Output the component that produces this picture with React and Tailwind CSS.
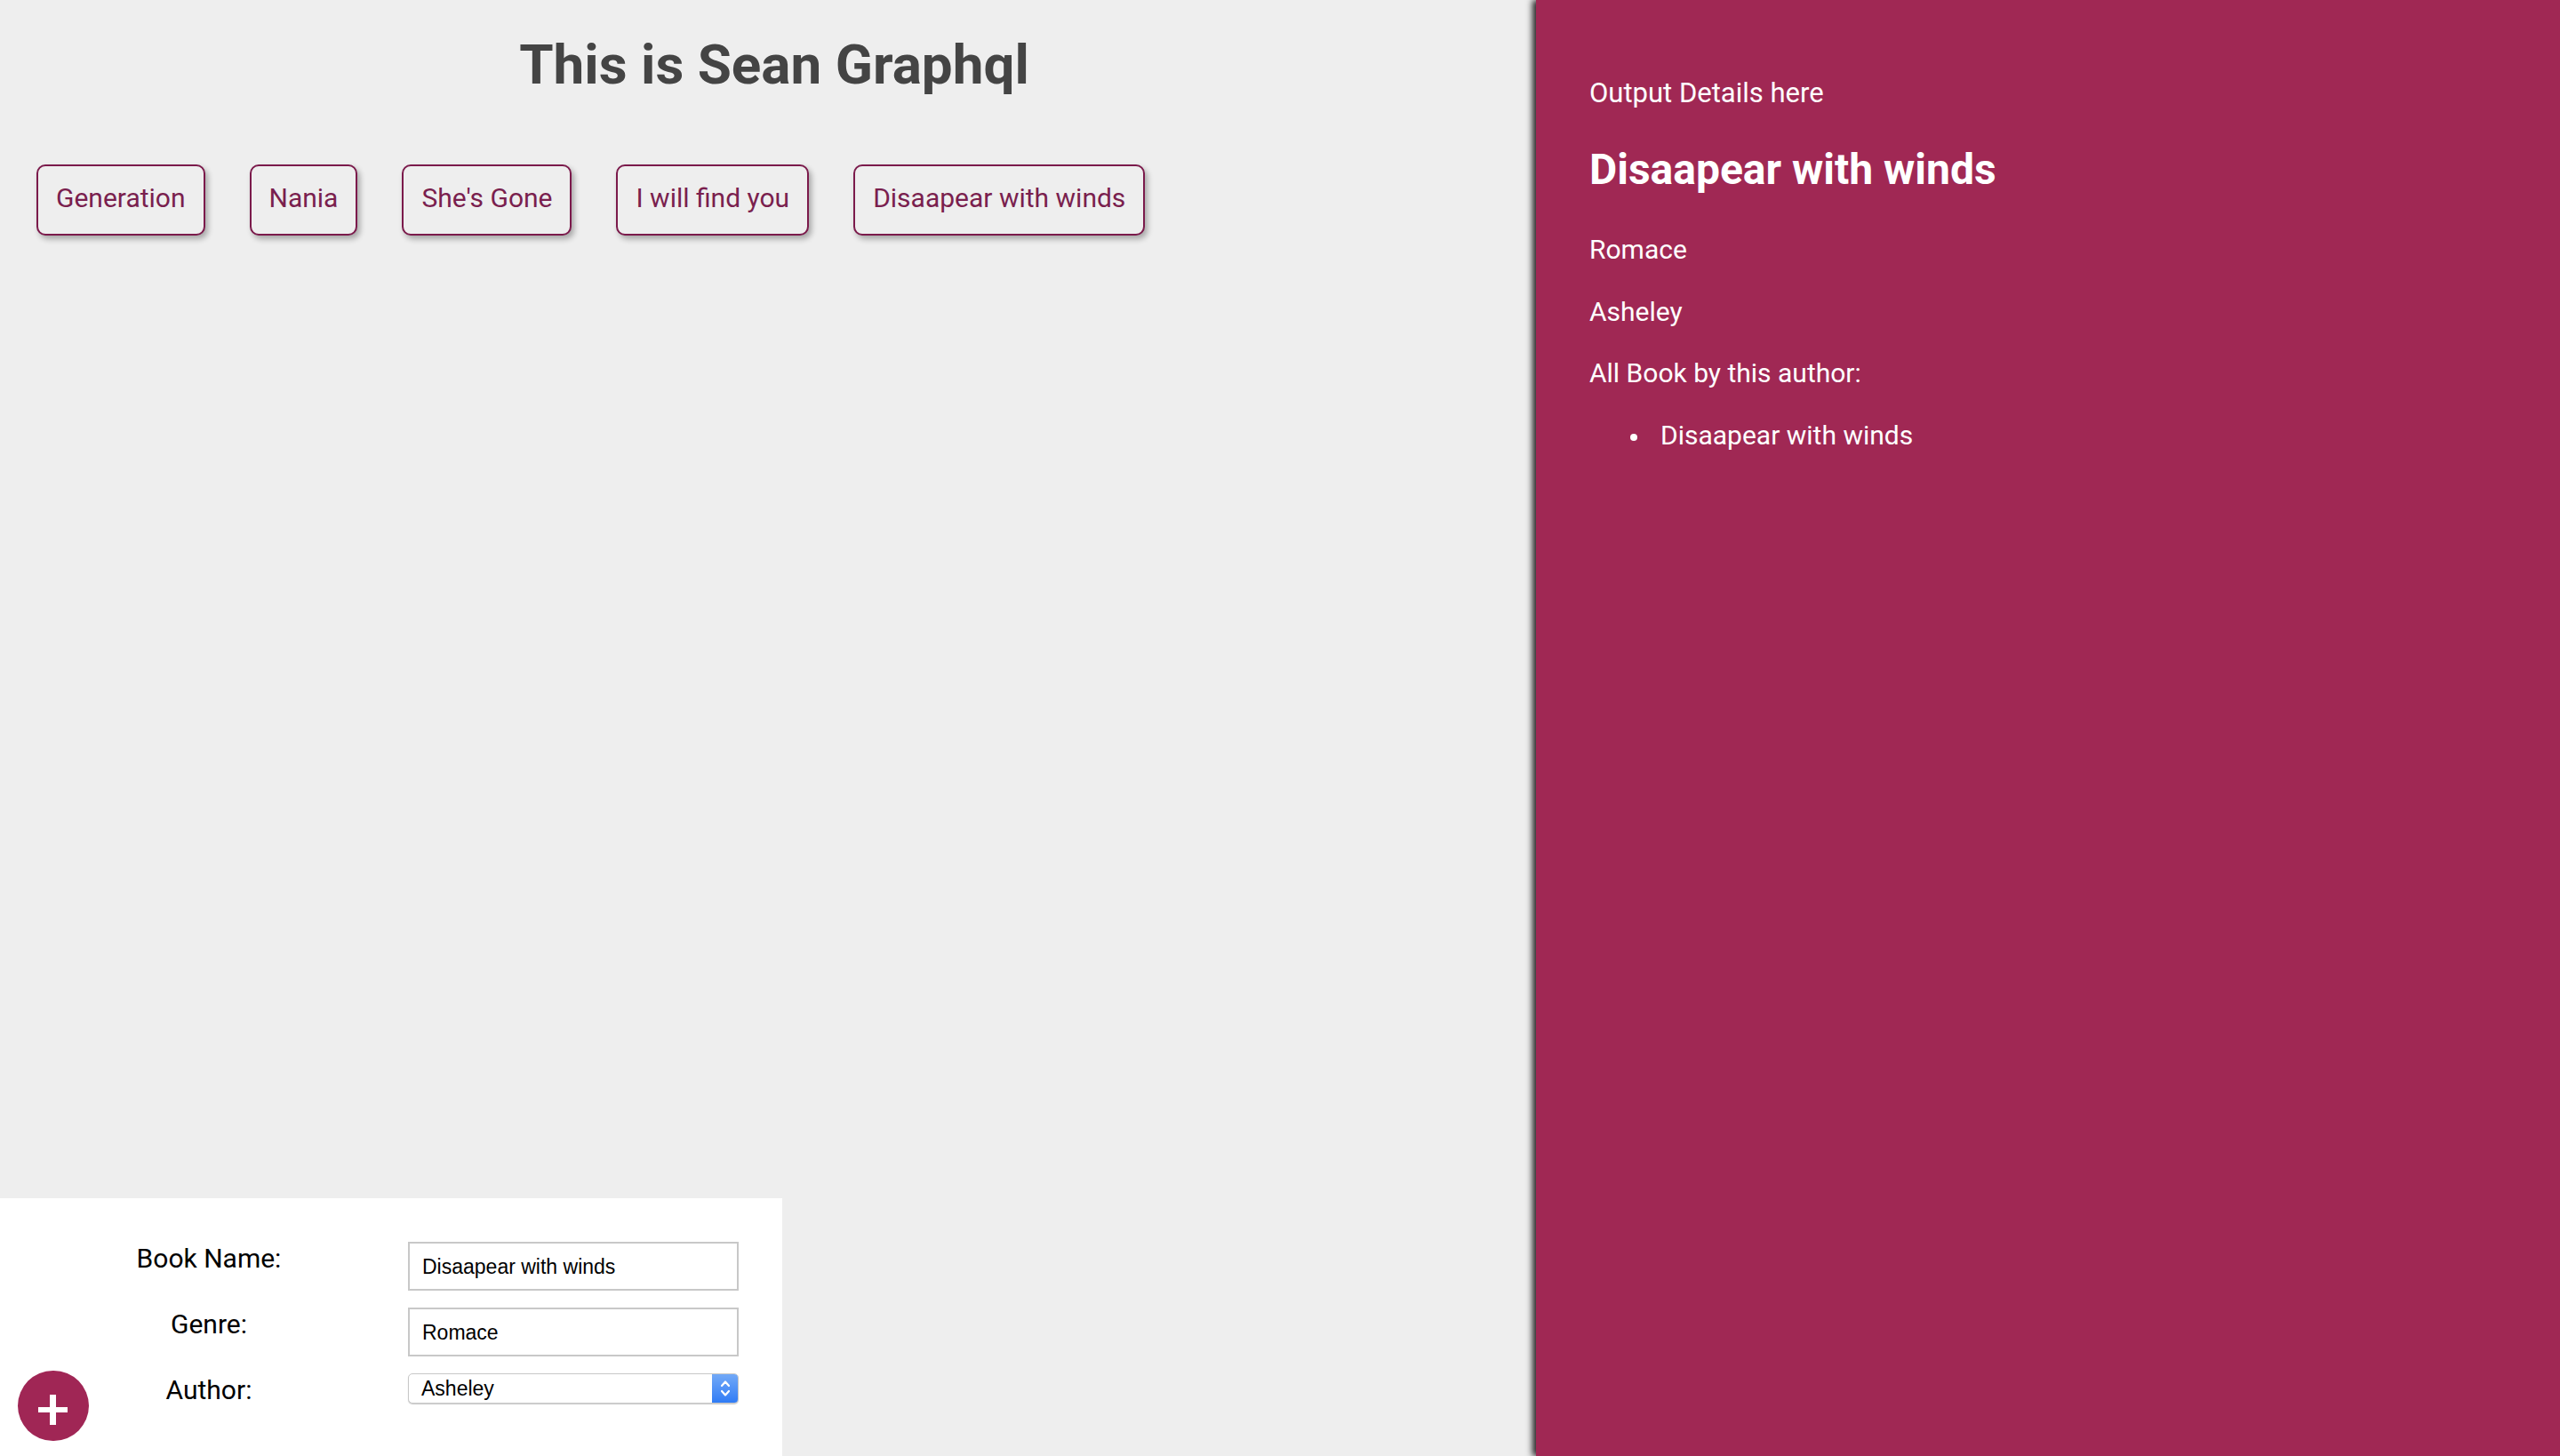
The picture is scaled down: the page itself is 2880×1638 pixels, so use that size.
import React from "react";

const books = ["Generation", "Nania", "She's Gone", "I will find you", "Disaapear with winds"];

function Row({ label, children }) {
  return (
    <div className="flex h-[74px] items-start">
      <div className="w-[459px] pl-[11px] pt-[1px] text-center text-[30px] leading-[36px] text-black">{label}</div>
      {children}
    </div>
  );
}

export default function App() {
  return (
    <div
      className="flex h-[1638px] w-full overflow-hidden bg-[#eeeeee]"
      style={{ fontFamily: "Roboto, 'Liberation Sans', sans-serif" }}
    >
      <div className="relative flex w-[1728px] shrink-0 flex-col">
        <h1 className="mt-[35px] pl-[14px] text-center text-[62px] font-bold leading-[75px] text-[#444444]">
          This is Sean Graphql
        </h1>
        <div className="mt-[75px] flex gap-[50px] pl-[41px]">
          {books.map((b) => (
            <button
              key={b}
              className="h-[80px] rounded-[10px] border-2 border-[#7b1a4b] bg-[#eeeeee] px-[20px] pb-[5px] text-[30px] leading-[36px] text-[#7a1f4e] shadow-[3px_4px_6px_rgba(0,0,0,0.3)]"
            >
              {b}
            </button>
          ))}
        </div>
        <div className="flex-1" />
        <div className="h-[290px] w-[880px] bg-white pt-[49px]">
          <Row label="Book Name:">
            <input
              readOnly
              value="Disaapear with winds"
              className="h-[55px] w-[372px] border-2 border-[#c8c8c8] bg-white px-[14px] pt-[2px] text-[23px] text-black outline-none"
              style={{ fontFamily: "'Liberation Sans', Arial, sans-serif" }}
            />
          </Row>
          <Row label="Genre:">
            <input
              readOnly
              value="Romace"
              className="h-[55px] w-[372px] border-2 border-[#c8c8c8] bg-white px-[14px] pt-[2px] text-[23px] text-black outline-none"
              style={{ fontFamily: "'Liberation Sans', Arial, sans-serif" }}
            />
          </Row>
          <Row label="Author:">
            <div
              className="flex h-[34px] w-[372px] items-stretch overflow-hidden rounded-[5px] border border-[#c8c8c8] bg-white shadow-[0_1px_1px_rgba(0,0,0,0.2)]"
              style={{ fontFamily: "'Liberation Sans', Arial, sans-serif" }}
            >
              <div className="flex flex-1 items-center pl-[14px] text-[23px] text-black">Asheley</div>
              <div className="flex w-[29px] items-center justify-center bg-gradient-to-b from-[#72a9f7] to-[#2f7bf5]">
                <svg width="14" height="24" viewBox="0 0 14 24" fill="none" stroke="white" strokeWidth="2.2" strokeLinecap="round" strokeLinejoin="round">
                  <polyline points="3,9 7,4.5 11,9" />
                  <polyline points="3,15 7,19.5 11,15" />
                </svg>
              </div>
            </div>
          </Row>
        </div>
        <div className="absolute left-[20px] top-[1542px] flex h-[79px] w-[80px] items-center justify-center rounded-full bg-[#a02655]">
          <svg width="34" height="34" viewBox="0 0 34 34" className="mt-[9px]">
            <rect x="13" y="0" width="7" height="34" fill="white" />
            <rect x="0" y="14" width="33" height="6" fill="white" />
          </svg>
        </div>
      </div>
      <div className="relative flex-1 bg-[#a02854] pl-[60px] pt-[85px] text-white shadow-[-4px_0_7px_rgba(0,0,0,0.85)]">
        <p className="text-[31px] leading-[40px]">Output Details here</p>
        <h2 className="mt-[38px] text-[48px] font-bold leading-[56px]">Disaapear with winds</h2>
        <p className="mt-[42px] text-[30px] leading-[40px]">Romace</p>
        <p className="mt-[30px] text-[30px] leading-[40px]">Asheley</p>
        <p className="mt-[29px] text-[30px] leading-[40px]">All Book by this author:</p>
        <ul className="mt-[30px]">
          <li className="flex items-center text-[30px] leading-[40px]">
            <span className="ml-[46px] mr-[26px] mt-[4px] h-[8px] w-[8px] rounded-full bg-white" />
            Disaapear with winds
          </li>
        </ul>
      </div>
    </div>
  );
}
